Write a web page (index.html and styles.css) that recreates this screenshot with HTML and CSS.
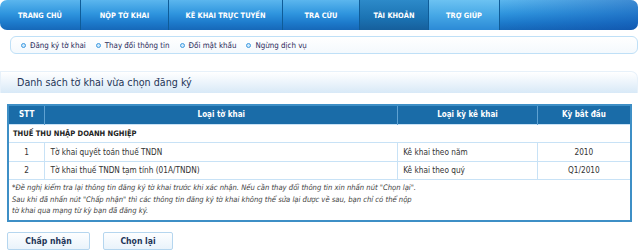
FILE: index.html
```html
<!DOCTYPE html>
<html lang="vi">
<head>
<meta charset="utf-8">
<link rel="stylesheet" href="styles.css">
</head>
<body>
<nav class="nav">
  <a class="tab t1">TRANG CHỦ</a>
  <a class="tab t2">NỘP TỜ KHAI</a>
  <a class="tab t3">KÊ KHAI TRỰC TUYẾN</a>
  <a class="tab t4">TRA CỨU</a>
  <a class="tab t5 active">TÀI KHOẢN</a>
  <a class="tab t6 light">TRỢ GIÚP</a>
  <span class="tab-rest"></span>
</nav>
<div class="subnav">
  <span class="sub"><i class="dot"></i>Đăng ký tờ khai</span>
  <span class="sub"><i class="dot"></i>Thay đổi thông tin</span>
  <span class="sub"><i class="dot"></i>Đổi mật khẩu</span>
  <span class="sub"><i class="dot"></i>Ngừng dịch vụ</span>
</div>
<div class="panel-head">Danh sách tờ khai vừa chọn đăng ký</div>
<table class="grid">
  <thead>
    <tr><th class="c1">STT</th><th class="c2">Loại tờ khai</th><th class="c3">Loại kỳ kê khai</th><th class="c4">Kỳ bắt đầu</th></tr>
  </thead>
  <tbody>
    <tr class="group"><td colspan="4">THUẾ THU NHẬP DOANH NGHIỆP</td></tr>
    <tr><td class="center">1</td><td>Tờ khai quyết toán thuế TNDN</td><td>Kê khai theo năm</td><td class="center">2010</td></tr>
    <tr><td class="center">2</td><td>Tờ khai thuế TNDN tạm tính (01A/TNDN)</td><td>Kê khai theo quý</td><td class="center">Q1/2010</td></tr>
    <tr class="note"><td colspan="4">*Đề nghị kiểm tra lại thông tin đăng ký tờ khai trước khi xác nhận. Nếu cần thay đổi thông tin xin nhấn nút "Chọn lại".<br>Sau khi đã nhấn nút "Chấp nhận" thì các thông tin đăng ký tờ khai không thể sửa lại được về sau, bạn chỉ có thể nộp<br>tờ khai qua mạng từ kỳ bạn đã đăng ký.</td></tr>
  </tbody>
</table>
<div class="actions">
  <button class="btn b1">Chấp nhận</button>
  <button class="btn b2">Chọn lại</button>
</div>
</body>
</html>
```
FILE: styles.css
```css
* { box-sizing: border-box; }
html, body { margin: 0; padding: 0; background: #fff; }
body { width: 640px; height: 252px; overflow: hidden; font-family: "DejaVu Sans", Verdana, sans-serif; color: #222; }

.nav {
  display: flex;
  height: 30px;
  width: 638px;
  border-radius: 7px;
  overflow: hidden;
  background: linear-gradient(180deg, #5bb6ee 0%, #2f95de 45%, #1d7bcc 75%, #1668b8 100%);
}
.tab {
  display: flex; align-items: center; justify-content: center;
  color: #fff; font-weight: bold; font-size: 7.4px;
  font-family: "DejaVu Sans Condensed", "DejaVu Sans", sans-serif;
  border-right: 1px solid #0f5c98;
  padding-top: 1px;
}
.t1 { width: 81px; }
.t2 { width: 88px; }
.t3 { width: 114px; }
.t4 { width: 77px; }
.t5 { width: 69px; }
.t6 { width: 71px; }
.active { background: linear-gradient(180deg, #2d8ac9 0%, #1b73b3 60%, #165f9c 100%); }
.light { background: linear-gradient(180deg, #6cc2f2 0%, #46a8e6 50%, #2c8ad6 100%); }
.tab-rest { flex: 1; background: linear-gradient(90deg, rgba(0,0,0,0) 0%, rgba(10,60,160,0.35) 100%); }

.subnav {
  margin: 6px 2px 0 10px;
  height: 18px;
  border: 1px solid #bfe0f7;
  border-radius: 6px;
  background: linear-gradient(180deg, #fff 0%, #f4f9fd 100%);
  display: flex; align-items: center;
  padding-left: 10px; gap: 10px;
  font-family: "DejaVu Sans Condensed", "DejaVu Sans", sans-serif;
  font-size: 7.9px; color: #2a2a5a;
}
.sub { display: flex; align-items: center; gap: 4px; }
.dot {
  width: 5px; height: 5px; border-radius: 50%;
  background: #cfe9fb; border: 1.5px solid #3d9ae0;
}

.panel-head {
  margin: 17px 2px 0 0;
  height: 22px;
  border: 1px solid #e7f1fa;
  border-bottom: none;
  border-radius: 0 7px 0 0;
  background: linear-gradient(180deg, #ffffff 0%, #eaf3fb 55%, #d8e9f7 100%);
  padding-left: 16px;
  display: flex; align-items: center;
  font-family: "DejaVu Sans", sans-serif;
  font-size: 9.6px; color: #1f3557;
}

.grid {
  margin: 11px 0 0 7px;
  width: 625px;
  border-collapse: collapse;
  border: 2px solid #3e8fc6;
  font-size: 8.2px;
  color: #333;
  font-family: "DejaVu Sans Condensed", "DejaVu Sans", sans-serif;
}
.grid th {
  background: #1a6ca8; color: #fff; font-weight: bold; font-size: 8px;
  height: 19px; border-left: 1px solid #5fa2d2; text-align: center; padding: 0;
  font-family: "DejaVu Sans Condensed", "DejaVu Sans", sans-serif;
}
.grid th:first-child { border-left: none; }
.c1 { width: 37px; }
.c2 { width: 354px; }
.c3 { width: 140px; }
.c4 { width: 94px; }
.grid td {
  height: 18.5px; border: 1px solid #c8e2f6; padding: 0 0 0 5px;
}
.grid td.center { text-align: center; padding: 0; }
.group td { font-weight: bold; color: #222; font-size: 7.5px; padding-left: 4px; }
.note td { font-style: italic; color: #444; font-size: 7.6px; line-height: 11.5px; padding: 2px 0 3px 3px; height: 37px; }

.actions { display: flex; gap: 13px; margin: 10px 0 0 7px; }
.btn {
  height: 18px; border: 1px solid #b5d6ef; border-radius: 2px;
  background: linear-gradient(180deg, #fdfeff 0%, #e9f3fb 100%);
  font-family: "DejaVu Sans Condensed", "DejaVu Sans", sans-serif; font-weight: bold; font-size: 8.6px; color: #1d3557;
  padding: 0;
}
.b1 { width: 83px; }
.b2 { width: 70px; }
```
